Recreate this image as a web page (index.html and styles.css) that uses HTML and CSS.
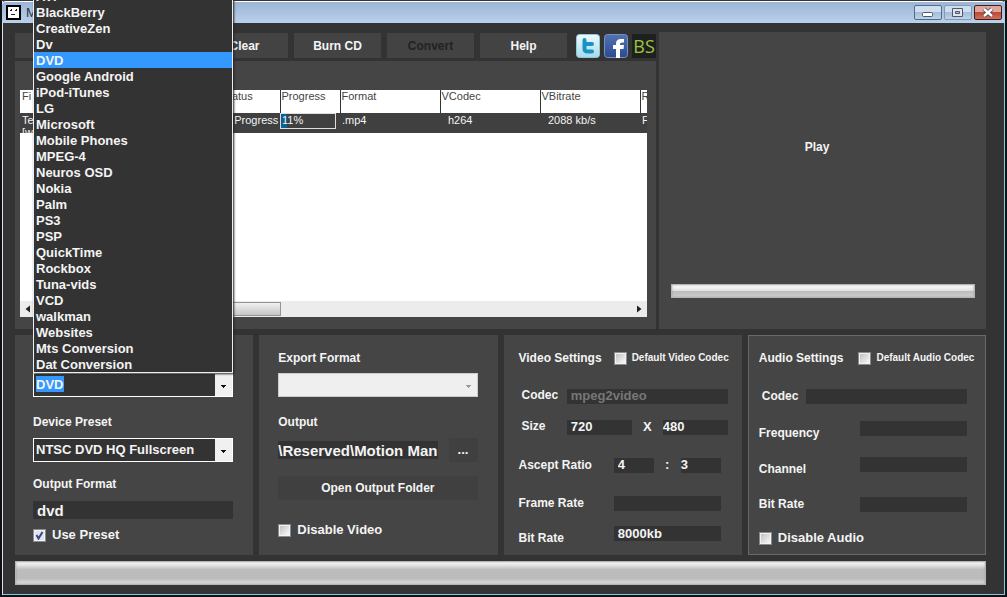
FILE: index.html
```html
<!DOCTYPE html>
<html lang="en">
<head>
<meta charset="utf-8">
<title>M</title>
<link rel="stylesheet" href="styles.css">
</head>
<body>
<div class="window">
  <header class="titlebar">
    <svg class="app-icon" viewBox="0 0 15 15"><rect width="15" height="15" fill="#000"/><rect x="2" y="2" width="11" height="11" fill="#fff"/><path d="M4 5h2v1H4zM9 5h2v1H9zM5 9h4v1H5zM5 4h1v1H5zM10 4h1v1h-1z" fill="#222"/></svg>
    <span class="title">M</span>
    <div class="window-buttons">
      <button class="wbtn" aria-label="Minimize"><svg viewBox="0 0 26 13"><rect x="7.500" y="6.500" width="10" height="4" rx="1" fill="#fff" stroke="#556"/></svg></button>
      <button class="wbtn faded" aria-label="Maximize"><svg viewBox="0 0 26 13"><path d="M7.500 2.500h10v8h-10zM10.500 5.500h4v2h-4z" fill="#dde6f0" stroke="#556" fill-rule="evenodd"/></svg></button>
      <button class="wbtn close" aria-label="Close"><svg viewBox="0 0 26 13"><path d="M9 3l8 7M17 3l-8 7" stroke="#445" stroke-width="4"/><path d="M9 3l8 7M17 3l-8 7" stroke="#fff" stroke-width="2.400"/></svg></button>
    </div>
  </header>

  <main class="content">
    <div class="upper">
      <div class="left">
        <nav class="toolbar">
          <button class="tool"></button>
          <button class="tool"></button>
          <button class="tool">Clear</button>
          <button class="tool">Burn CD</button>
          <button class="tool" disabled>Convert</button>
          <button class="tool">Help</button>
          <div class="social">
            <a href="#" aria-label="Twitter"><svg viewBox="0 0 24 24"><defs><linearGradient id="tw" x2="0" y2="1"><stop offset="0" stop-color="#f2fafc"/><stop offset="1" stop-color="#a5dbea"/></linearGradient></defs><rect x=".5" y=".5" width="23" height="23" rx="3" fill="url(#tw)" stroke="#8fc8d8"/><path d="M8.500 6v8.500q0 3 3 3H16M8.500 10H16" fill="none" stroke="#1993c6" stroke-width="4" stroke-linecap="round"/></svg></a>
            <a href="#" aria-label="Facebook"><svg viewBox="0 0 24 24"><defs><linearGradient id="fb" x2="0" y2="1"><stop offset="0" stop-color="#5272b4"/><stop offset="1" stop-color="#2c4b8e"/></linearGradient></defs><rect x=".5" y=".5" width="23" height="23" rx="3" fill="url(#fb)" stroke="#7791c4"/><path d="M12 24v-9H9v-4h3V9.500q0-4.500 5-4.500h3v3.500h-2q-2 0-2 1.500v1h4l-.5 4H16v9z" fill="#fff"/></svg></a>
            <a href="#" class="bs">BS</a>
          </div>
        </nav>
        <section class="panel queue">
          <div class="list">
            <table>
              <colgroup><col class="c-file"><col class="c-status"><col class="c-status"><col class="c-wide"><col class="c-wide"><col class="c-wide"><col></colgroup>
              <thead><tr><th>Fi</th><th>Status</th><th>Progress</th><th>Format</th><th>VCodec</th><th>VBitrate</th><th>R</th></tr></thead>
              <tbody><tr>
                <td><div class="cell">Te<br>[w</div></td>
                <td><div class="cell">In Progress</div></td>
                <td class="flush"><div class="meter"><div class="fill" style="width:11%"></div><span>11%</span></div></td>
                <td><div class="cell">.mp4</div></td>
                <td><div class="cell inset">h264</div></td>
                <td><div class="cell inset">2088 kb/s</div></td>
                <td><div class="cell">F</div></td>
              </tr></tbody>
            </table>
            <div class="scrollbar">
              <svg viewBox="0 0 17 16"><path d="M10 4.500v7L5.500 8z" fill="#222"/></svg>
              <div class="thumb"></div>
              <svg viewBox="0 0 17 16"><path d="M7 4.500v7L11.500 8z" fill="#222"/></svg>
            </div>
          </div>
        </section>
      </div>
      <section class="panel preview">
        <button class="play">Play</button>
        <div class="bar slim"></div>
      </section>
    </div>

    <div class="lower">
      <section class="panel device">
        <div class="combo">
          <select class="select highlighted" aria-label="DVD"><option>DVD</option></select>
          <ul class="menu" role="listbox">
            <li>AVI</li><li>BlackBerry</li><li>CreativeZen</li><li>Dv</li><li class="active">DVD</li><li>Google Android</li><li>iPod-iTunes</li><li>LG</li><li>Microsoft</li><li>Mobile Phones</li><li>MPEG-4</li><li>Neuros OSD</li><li>Nokia</li><li>Palm</li><li>PS3</li><li>PSP</li><li>QuickTime</li><li>Rockbox</li><li>Tuna-vids</li><li>VCD</li><li>walkman</li><li>Websites</li><li>Mts Conversion</li><li>Dat Conversion</li>
          </ul>
        </div>
        <label class="label" for="preset">Device Preset</label>
        <select class="select" id="preset"><option>NTSC DVD HQ Fullscreen</option></select>
        <label class="label" for="oformat">Output Format</label>
        <input class="field big" id="oformat" value="dvd">
        <label class="check"><input type="checkbox" checked>Use Preset</label>
      </section>

      <section class="panel export">
        <label class="label" for="eformat">Export Format</label>
        <select class="select light" id="eformat" disabled><option></option></select>
        <label class="label" for="output">Output</label>
        <div class="path">
          <input class="field big" id="output" value="\Reserved\Motion Man">
          <button class="flat">...</button>
        </div>
        <button class="flat open">Open Output Folder</button>
        <label class="check"><input type="checkbox">Disable Video</label>
      </section>

      <section class="panel settings video">
        <div class="heading"><h2>Video Settings</h2><label class="check small"><input type="checkbox">Default Video Codec</label></div>
        <div class="row wide high"><label for="vcodec">Codec</label><input class="field long" id="vcodec" value="mpeg2video" disabled></div>
        <div class="row wide close-up high"><label for="w">Size</label><input class="field mid" id="w" value="720"><span class="times">X</span><input class="field mid bare" aria-label="X" value="480"></div>
        <div class="row"><label for="ar">Ascept Ratio</label><input class="field short" id="ar" value="4"><span class="colon">:</span><input class="field short bare" aria-label=":" value="3"></div>
        <div class="row"><label for="fr">Frame Rate</label><input class="field" id="fr"></div>
        <div class="row close-up low"><label for="vbr">Bit Rate</label><input class="field" id="vbr" value="8000kb"></div>
      </section>

      <section class="panel settings audio">
        <div class="heading"><h2>Audio Settings</h2><label class="check small"><input type="checkbox">Default Audio Codec</label></div>
        <div class="row wide"><label for="acodec">Codec</label><input class="field long" id="acodec"></div>
        <div class="row low"><label for="freq">Frequency</label><input class="field" id="freq"></div>
        <div class="row low"><label for="chan">Channel</label><input class="field" id="chan"></div>
        <div class="row"><label for="abr">Bit Rate</label><input class="field" id="abr"></div>
        <label class="check"><input type="checkbox">Disable Audio</label>
      </section>
    </div>
    <div class="bar"></div>
  </main>
</div>
</body>
</html>
```
FILE: styles.css
```css
* { box-sizing: border-box; }
body { margin: 0; background: #111; overflow: hidden; font: bold 12px/16px "Liberation Sans", Arial, sans-serif; color: #f4f4f4; }
button, input, select { font: inherit; color: inherit; margin: 0; padding: 0; border: 0; border-radius: 0; }
svg { display: block; }

.window { min-height: 100vh; display: flex; flex-direction: column; background: #333; border: 2px solid #111; border-top: 1px solid #333; box-shadow: inset 1px 0 #dbe4ee, inset -1px 0 #7cc8e8, inset 0 -1px #7cc8e8; }
.titlebar { display: flex; align-items: center; height: 22px; padding: 0 3px 0 4px; gap: 5px; background: linear-gradient(#9db5d6, #b9d1ea); border-top: 1px solid #fff; border-radius: 4px 4px 0 0; }
.app-icon { width: 15px; height: 15px; }
.title { flex: 1; color: #334; font-weight: normal; font-size: 13px; }
.window-buttons { display: flex; gap: 2px; }
.wbtn { width: 28px; height: 15px; border: 1px solid #536a88; border-radius: 2px; background: linear-gradient(#cfdeee 45%, #a4bcd8 50%, #bdd3ea); }
.wbtn svg { width: 26px; height: 13px; }
.faded { border-color: #8299b8; }
.close { border-color: #431b1b; background: linear-gradient(#e0a59b 45%, #bd4a36 50%, #d0705c); }

.content { flex: 1; display: flex; flex-direction: column; gap: 6px; padding: 9px 19px 10px 13px; }
.upper { display: grid; grid-template-columns: minmax(0, 1fr) 327px; gap: 3px; }
.left { display: flex; flex-direction: column; gap: 3px; }
.panel { background: #454545; }

.toolbar { display: flex; gap: 6px; padding-top: 1px; }
.tool { flex: 1; height: 25px; background: #434343; }
.tool:disabled { color: #222; }
.social { display: flex; align-items: center; gap: 4px; margin-left: 3px; }
.social a { width: 24px; height: 24px; color: #9fc63b; text-decoration: none; }
.social .bs { background: #1e1f21; font: 18px/24px "Open Sans", sans-serif; text-align: center; }

.queue { height: 268px; padding: 29px 9px 12px 5px; }
.list { height: 100%; display: flex; flex-direction: column; background: #fff; overflow: hidden; }
table { width: 100%; table-layout: fixed; border-collapse: collapse; font-size: 11px; font-weight: normal; line-height: 12px; }
.c-file { width: 200px; }
.c-status { width: 60px; }
.c-wide { width: 100px; }
th { height: 23px; padding: 0 0 0 1px; text-align: left; vertical-align: top; font-weight: normal; color: #444; border-left: 1px solid #333; overflow: hidden; }
th:first-child { border-left: 0; padding-left: 2px; }
td { padding: 0 0 0 2px; vertical-align: top; background: #404040; overflow: hidden; }
td.flush { padding: 0; }
.cell { height: 20px; padding-top: 1px; overflow: hidden; white-space: nowrap; }
.inset { padding-left: 6px; }
.meter { position: relative; width: 56px; height: 16px; border: 1px solid #ddd; }
.fill { height: 100%; background: #0b6193; }
.meter span { position: absolute; left: 1px; top: 0; }
.scrollbar { display: flex; align-items: center; height: 16px; margin-top: auto; background: #ececec; }
.scrollbar svg { width: 17px; height: 16px; }
.thumb { width: 244px; height: 14px; margin-right: auto; border: 1px solid #949494; background: linear-gradient(#f0f0f0, #c6c6c6); }

.preview { display: flex; flex-direction: column; justify-content: space-between; padding: 106px 11px 31px 12px; }
.play { align-self: center; background: none; height: 18px; margin-right: 12px; }
.bar { height: 24px; border: 1px solid #b5b5b5; background: linear-gradient(#fff, #d8d8d8 20%, #bcbcbc 35%, #bcbcbc 75%, #dedede); box-shadow: inset 0 0 2px #999; }
.slim { height: 14px; background: linear-gradient(#fff, #e2e2e2 45%, #bcbcbc 55%, #d0d0d0); }

.lower { display: grid; grid-template-columns: repeat(4, minmax(0, 1fr)); gap: 6px; min-height: 220px; }
.device { display: flex; flex-direction: column; padding: 38px 20px 0 18px; }
.combo { position: relative; }
.menu { position: absolute; z-index: 2; left: 0; right: 0; bottom: 100%; margin: 0; padding: 0; list-style: none; background: #333; border: 1px solid #eee; box-shadow: 1px 1px 2px #222; font-size: 13px; line-height: 18px; }
.menu li { padding-left: 2px; height: 16px; }
.menu .active { background: #3399ff; }
.select {
  --arrow: #111;
  --face: linear-gradient(#f0f0f0, #f0f0f0) right / 17px 100% no-repeat, #333;
  display: block; width: 100%; height: 24px; padding: 0 20px 1px 2px; appearance: none; border: 1px solid #fff; font-size: 13px;
  background:
    linear-gradient(var(--arrow), var(--arrow)) right 6px top 11px / 5px 1px no-repeat,
    linear-gradient(var(--arrow), var(--arrow)) right 7px top 12px / 3px 1px no-repeat,
    linear-gradient(var(--arrow), var(--arrow)) right 8px top 13px / 1px 1px no-repeat,
    var(--face);
}
.highlighted { --face: linear-gradient(#f0f0f0, #f0f0f0) right / 17px 100% no-repeat, linear-gradient(#3399ff, #3399ff) 2px 2px / 28px 16px no-repeat, #333; }
.light { --arrow: #999; --face: #efefef; opacity: 1; border-color: #ccc; }
.label { display: block; margin: 17px 0 8px; }
.device .label + .select + .label { margin-top: 14px; }
.field { height: 15px; width: 107px; padding: 0 4px; background: #333; font-size: 13px; }
.field:disabled { color: #777; }
.big { width: 100%; height: 18px; font-size: 15px; }
.check { display: flex; align-items: center; gap: 6px; font-size: 13px; }
.check input { appearance: none; width: 13px; height: 13px; border: 1px solid #8b8b8b; background: linear-gradient(135deg, #bbb, #fff); box-shadow: inset 0 0 0 1px #f2f2f2; }
.check input:checked { background: url("data:image/svg+xml,%3Csvg xmlns='http://www.w3.org/2000/svg' viewBox='0 0 11 11'%3E%3Cpath d='M2.500 5l2 3.500L8.500 2' fill='none' stroke='%2338478a' stroke-width='2'/%3E%3C/svg%3E") center / 11px 11px no-repeat, #dfe4ef; }
.device .check { margin-top: 9px; }
.small { gap: 5px; font-size: 10px; }

.export { padding: 15px 20px 0 19px; }
.export .label:first-child { margin: 0 0 7px; }
.path { display: flex; align-items: center; gap: 11px; }
.path .field { flex: 1; min-width: 0; padding: 0; }
.flat { width: 29px; height: 24px; background: #404040; font-size: 13px; }
.open { display: block; width: 100%; margin: 14px 0 22px; font-size: 12px; }
.device .big { margin-top: 1px; }
.device .big + .check { margin-top: 8px; }

.settings { padding: 15px 0 0 15px; }
.heading { display: flex; align-items: center; gap: 12px; white-space: nowrap; }
h2 { margin: 0; font-size: 12px; }
.row { display: flex; align-items: center; height: 18px; margin: 20px 21px 0 0; }
.heading + .row { margin-top: 21px; }
.wide { margin-right: 14px; }
.wide label { padding-left: 3px; }
.close-up { margin-top: 13px; }
.row label { flex: 1; }
.long { width: 161px; }
.mid { width: 65px; }
.short { width: 40px; }
.bare { padding: 0; }
.times, .colon { text-align: center; width: 31px; font-size: 13px; }
.colon { width: 27px; }
.high label { align-self: flex-start; }
.low { height: 20px; }
.low label { align-self: flex-end; }
.low .field { align-self: flex-start; }
.video .low { margin-top: 14px; }
.audio { padding: 14px 0 0 10px; border: 1px solid #696969; }
.audio .heading { gap: 15px; }
.audio .row { margin-right: 18px; }
.audio .low { margin-top: 16px; }
.audio .low + .row:not(.low) { margin-top: 18px; }
.audio > .check { margin-top: 17px; }
```
